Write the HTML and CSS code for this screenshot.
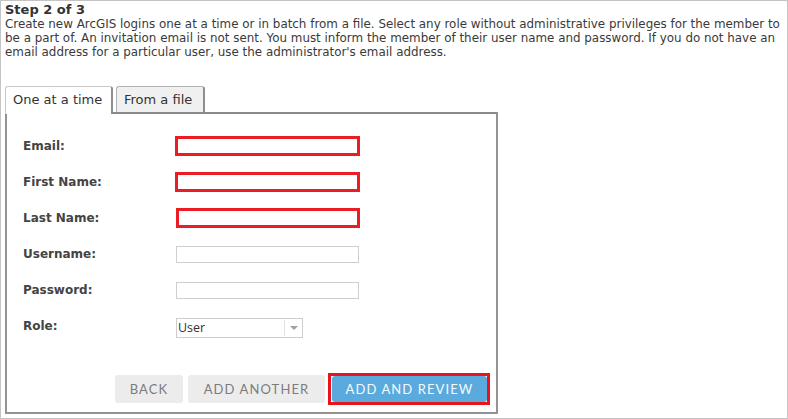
FILE: index.html
```html
<!DOCTYPE html>
<html>
<head>
<meta charset="utf-8">
<link rel="stylesheet" href="styles.css">
</head>
<body>
<div class="frame">
  <div class="step">Step 2 of 3</div>
  <p class="intro">Create new ArcGIS logins one at a time or in batch from a file. Select any role without administrative privileges for the member to<br>be a part of. An invitation email is not sent. You must inform the member of their user name and password. If you do not have an<br>email address for a particular user, use the administrator's email address.</p>
  <div class="tabs">
    <div class="tab active">One at a time</div>
    <div class="tab">From a file</div>
  </div>
  <div class="panel">
    <div class="row"><span class="label">Email:</span><span class="input mark"></span></div>
    <div class="row"><span class="label">First Name:</span><span class="input mark"></span></div>
    <div class="row"><span class="label">Last Name:</span><span class="input mark last"></span></div>
    <div class="row"><span class="label">Username:</span><span class="input"></span></div>
    <div class="row"><span class="label">Password:</span><span class="input"></span></div>
    <div class="row"><span class="label">Role:</span>
      <div class="select"><span class="select-value">User</span><span class="select-arrow"><span class="tri"></span></span></div>
    </div>
    <div class="actions">
      <button class="btn grey back">BACK</button>
      <button class="btn grey another">ADD ANOTHER</button>
      <span class="highlight"><button class="btn blue">ADD AND REVIEW</button></span>
    </div>
  </div>
</div>
</body>
</html>
```
FILE: styles.css
```css
* { box-sizing: border-box; }
html, body { margin: 0; padding: 0; background: #fff; }
.frame {
  width: 788px;
  height: 419px;
  border: 1px solid #c4c4c4;
  padding: 1px 0 0 4px;
  font-family: "DejaVu Sans", Verdana, sans-serif;
  color: #333;
}
.step {
  font-size: 13px;
  font-weight: bold;
  line-height: 15px;
  color: #333;
}
.intro {
  margin: 0;
  font-size: 11.9px;
  line-height: 14px;
  color: #3a3a3a;
  white-space: nowrap;
}
.tabs {
  display: flex;
  gap: 3px;
  margin-top: 27px;
  height: 26px;
}
.tab {
  height: 26px;
  padding: 0 0 0 7px;
  font-size: 13px;
  line-height: 26px;
  color: #333;
  background: #f0f0f0;
  border: 1px solid #b4b4b4;
  border-right: 2px solid #8e8e8e;
  border-bottom: none;
  border-radius: 3px 3px 0 0;
}
.tab.active {
  width: 108px;
  height: 28px;
  background: #fff;
  border-color: #c8c8c8;
  border-right-color: #8e8e8e;
  position: relative;
  z-index: 2;
}
.tab:not(.active) { width: 89px; }
.panel {
  width: 493px;
  height: 302px;
  border: 2px solid #939393;
  border-top-color: #8a8a8a;
  padding: 14px 9px 7px 16px;
  display: flex;
  flex-direction: column;
}
.row {
  height: 36px;
  display: flex;
  align-items: center;
}
.label {
  width: 153px;
  font-size: 12px;
  font-weight: bold;
  color: #444;
}
.input {
  display: block;
  width: 183px;
  height: 17px;
  border: 1px solid #cfcfcf;
  background: #fff;
}
.input.mark {
  width: 185px;
  height: 20px;
  margin-left: -1px;
  border: 3px solid #ec1c24;
}
.input.mark.last { margin-left: 0; width: 184px; }
.select {
  width: 127px;
  height: 20px;
  border: 1px solid #cdcdcd;
  display: flex;
  margin-top: 4px;
}
.select-value {
  width: 107px;
  font-family: "Open Sans", sans-serif;
  font-size: 12.5px;
  line-height: 17px;
  padding-left: 1px;
  color: #333;
}
.select-arrow {
  flex: 1;
  border-left: 1px solid #e2e2e2;
  margin: 1px 0;
  display: flex;
  align-items: center;
  justify-content: center;
}
.tri {
  width: 0;
  height: 0;
  border-left: 4px solid transparent;
  border-right: 4px solid transparent;
  border-top: 4px solid #a0a0a0;
}
.actions {
  margin-top: auto;
  display: flex;
  justify-content: flex-end;
  align-items: center;
}
.btn {
  font-family: "Lato", sans-serif;
  font-size: 13px;
  letter-spacing: 1.1px;
  border: none;
  border-radius: 3px;
  padding: 0;
  height: 28px;
}
.btn.grey {
  background: #ececec;
  color: #7c7c7c;
}
.back { width: 68px; margin-right: 5px; }
.another { width: 137px; }
.highlight {
  display: flex;
  margin-left: 3px;
  margin-right: -3px;
  padding: 0 0 0 1px;
  border: 3px solid #e8141c;
}
.btn.blue {
  width: 155px;
  height: 26px;
  background: #5aaadd;
  color: #f4faff;
}
```
